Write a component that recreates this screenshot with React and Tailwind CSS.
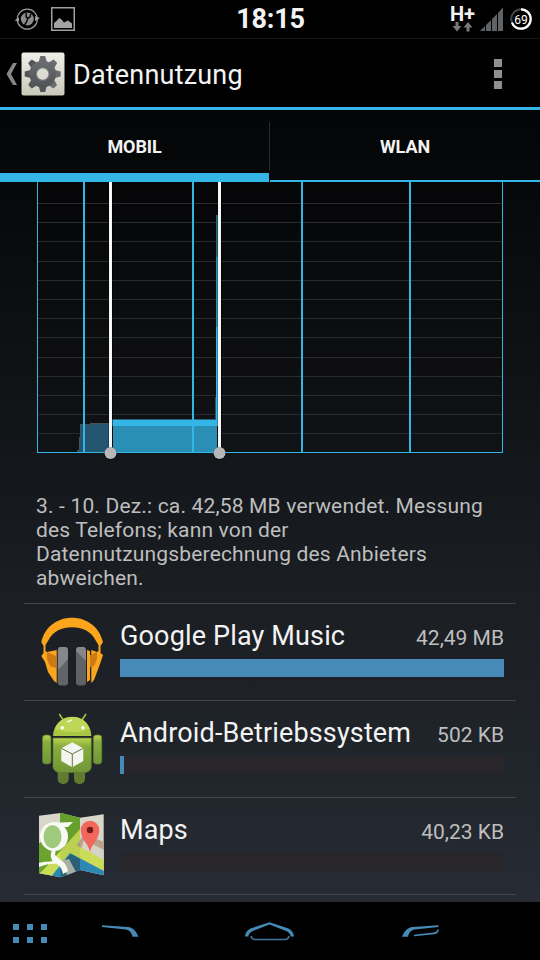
const GRID_ROWS = [21, 40, 59, 79, 98, 117, 136, 155, 175, 194, 213, 232, 251];

const apps = [
  { name: "Google Play Music", usage: "42,49 MB", percent: 100, icon: <MusicIcon /> },
  { name: "Android-Betriebssystem", usage: "502 KB", percent: 1.05, icon: <AndroidIcon /> },
  { name: "Maps", usage: "40,23 KB", percent: 0, icon: <MapsIcon /> },
];

export default function App() {
  return (
    <div className="flex h-[960px] w-[540px] flex-col overflow-hidden bg-black font-['Roboto',sans-serif] text-[#f3f3f3]">
      <StatusBar />
      <ActionBar />
      <div className="flex min-h-0 flex-1 flex-col bg-[linear-gradient(180deg,#040506_0%,#08090b_12%,#101113_32%,#14181c_47%,#1b1e23_62%,#20252b_82%,#272b34_100%)]">
        <Tabs />
        <UsageChart />
        <p className="ml-9 mt-[29px] h-[109px] w-[470px] text-[21px] leading-6 tracking-[0.17px] text-[#bebebe]">
          3. - 10. Dez.: ca. 42,58 MB verwendet. Messung
          <br />
          des Telefons; kann von der
          <br />
          Datennutzungsberechnung des Anbieters
          <br />
          abweichen.
        </p>
        <ul className="mx-6 border-t border-[#44474a]">
          {apps.map((app) => (
            <AppRow key={app.name} {...app} />
          ))}
        </ul>
      </div>
      <NavBar />
    </div>
  );
}

function StatusBar() {
  return (
    <div className="grid h-[39px] shrink-0 grid-cols-3 items-center border-b border-[#151515]">
      <div className="flex items-center gap-3 pl-[14px]">
        <svg width="26" height="24" viewBox="0 0 26 24" fill="none">
          <circle cx="13.300" cy="12.200" r="10" stroke="#9c9c9c" strokeWidth="1.300" />
          <path d="M.5 13.500L5 10.500v4zM26 11l-5-2v5z" fill="#9c9c9c" />
          <circle cx="13.300" cy="12" r="6.500" fill="#8d8d8d" />
          <path d="M12.200 6v4.200l2.200 1 2-1.800V7M13.800 11l-1 3.500-2.500 4" stroke="#0a0a0a" strokeWidth="1.500" />
        </svg>
        <svg width="24" height="24" viewBox="0 0 24 24" className="-ml-[1px]">
          <rect x=".75" y=".75" width="22.5" height="22.5" fill="none" stroke="#a0a0a0" strokeWidth="1.5" />
          <path d="M3 21v-5l3-2.500 2-2.500 2 1 3 3.500 4-2 4 3V21z" fill="#a3a3a3" />
        </svg>
      </div>
      <div className="pl-px text-center text-[27px] font-bold leading-[38px] tracking-[-0.2px]">18:15</div>
      <div className="flex items-center justify-end gap-[5px] pr-[7px]">
        <div className="flex w-[25px] flex-col items-center">
          <span className="text-[20px] font-bold leading-[15px]">H+</span>
          <svg width="22" height="10" viewBox="0 0 22 10" fill="#77797b">
            <path d="M3.500 0h3v4h3L5 9.500.5 4h3z" />
            <path d="M14.500 9.500h3v-4h3L16 0l-4.500 5.500h3z" />
          </svg>
        </div>
        <svg width="24" height="24" viewBox="0 0 24 24" fill="#606365">
          <path d="M0 24l5-5v5zM6 24v-6l5-5v11zM12 24V12l5-5v17zM18 24V6l5-5.500V24z" />
        </svg>
        <svg width="24" height="24" viewBox="0 0 24 24">
          <circle cx="12" cy="12" r="9.700" fill="none" stroke="#44474b" strokeWidth="2" />
          <circle
            cx="12"
            cy="12"
            r="9.700"
            fill="none"
            stroke="#fff"
            strokeWidth="2.200"
            pathLength="100"
            strokeDasharray="69 31"
            transform="rotate(-90 12 12)"
          />
          <text x="12" y="16.500" textAnchor="middle" fontSize="12" fill="#fff">
            69
          </text>
        </svg>
      </div>
    </div>
  );
}

function ActionBar() {
  return (
    <header className="flex h-[71px] shrink-0 items-center border-b-[3px] border-[#33b5e5] bg-black pl-[6px]">
      <svg width="11" height="22" viewBox="0 0 11 22" fill="#85878a" className="mt-[2px]">
        <path d="M7 0h4L5 11l6 11H7L.5 11z" />
      </svg>
      <div className="ml-[4px] mt-px">
        <SettingsIcon />
      </div>
      <h1 className="ml-[8px] mt-[4px] text-[27px] leading-none tracking-[0.2px]">Datennutzung</h1>
      <div className="ml-auto mr-[38px] mt-[2px] flex flex-col gap-[3px]">
        <span className="size-2 bg-[#8d8f90]" />
        <span className="size-2 bg-[#8d8f90]" />
        <span className="size-2 bg-[#8d8f90]" />
      </div>
    </header>
  );
}

function Tabs() {
  return (
    <div className="flex h-[72px] shrink-0 text-[18px] font-bold tracking-[-0.1px]">
      <div className="flex w-[269px] items-center justify-center border-b-[9px] border-[#33b5e5] pt-[10px]">MOBIL</div>
      <div className="mt-3 h-12 w-px bg-[#2b2c2d]" />
      <div className="flex flex-1 items-center justify-center border-b-2 border-[#33b5e5] pt-[3px]">WLAN</div>
    </div>
  );
}

function UsageChart() {
  return (
    <svg className="block shrink-0" width="540" height="283" viewBox="0 0 540 283" shapeRendering="crispEdges">
      <rect x="38" y="0" width="464" height="270" fill="#000" opacity="0.12" />
      <g fill="#292b2d">
        {GRID_ROWS.map((y) => (
          <rect key={y} x="38" y={y} width="464" height="1" />
        ))}
      </g>

      {/* usage before the selected range */}
      <path d="M77 270v-2h2l2-26h9v-1h19v29z" fill="#245672" />
      <path d="M77 268h2l2-26h9v-1h19" fill="none" stroke="#45535a" />

      {/* selected range */}
      <rect x="112" y="237" width="104" height="1" fill="#286580" />
      <rect x="112" y="238" width="105" height="6" fill="#33b5e5" />
      <rect x="113" y="244" width="104" height="26" fill="#2b8fb5" />
      <rect x="215" y="215" width="1" height="22" fill="#28566a" />
      <rect x="216" y="33" width="2" height="42" fill="#276985" />
      <rect x="216" y="75" width="2" height="70" fill="#2b8fb5" />
      <rect x="216" y="145" width="2" height="99" fill="#33b5e5" />

      <g fill="#33b5e5">
        <rect x="37" y="0" width="1" height="271" />
        <rect x="83" y="0" width="2" height="270" />
        <rect x="192" y="0" width="2" height="270" />
        <rect x="301" y="0" width="2" height="270" />
        <rect x="409" y="0" width="2" height="270" />
        <rect x="502" y="0" width="1" height="271" />
        <rect x="37" y="270" width="466" height="1" />
      </g>

      <Sweep x={109} />
      <Sweep x={218} />
    </svg>
  );
}

function Sweep({ x }) {
  return (
    <g>
      <rect x={x - 1} y="0" width="1" height="270" fill="#000" opacity="0.25" />
      <rect x={x + 3} y="0" width="1" height="270" fill="#000" opacity="0.5" />
      <rect x={x} y="0" width="3" height="267" fill="#f7f7f7" />
      <circle cx={x + 1.5} cy="271.500" r="6.500" fill="#000" opacity="0.4" shapeRendering="auto" />
      <circle cx={x + 1.5} cy="271" r="6" fill="#b7b7b7" shapeRendering="auto" />
    </g>
  );
}

function AppRow({ name, usage, percent, icon }) {
  return (
    <li className="flex h-[97px] items-center border-b border-[#44474a] px-3">
      <div className="mr-3 size-[72px] shrink-0">{icon}</div>
      <div className="flex-1 self-start pt-[14px]">
        <div className="flex h-[41px] items-start justify-between">
          <span className="text-[27px] leading-[36px] tracking-[0.15px]">{name}</span>
          <span className="text-[21px] leading-[40px] text-[#bebebe]">{usage}</span>
        </div>
        <div className="h-[18px] bg-[#28252b]">
          <div className="h-full bg-[#468ab8]" style={{ width: `${percent}%` }} />
        </div>
      </div>
    </li>
  );
}

function NavBar() {
  return (
    <nav className="h-[58px] shrink-0 bg-black">
      <svg width="540" height="58" viewBox="0 0 540 58" fill="none" stroke="#468ab8">
        <g fill="#468ab8" stroke="none">
          {[13, 27, 41].map((x) => (
            <g key={x}>
              <rect x={x} y="22" width="6" height="6" />
              <rect x={x} y="35" width="6" height="6" />
            </g>
          ))}
        </g>
        <path d="M102 23.300l26 1.700c5 .5 8 4 10.500 9.700h-6c-1-4-2.500-6.200-6.500-7.200l-24-2.500z" fill="#468ab8" stroke="none" />
        <path
          d="M245 34.500c.8-5 3-7 7-8.500l17.500-5.800 17.500 5.800c4 1.500 6.200 3.500 7 8.500h-3.200c-.8-3-2-4.500-5.300-5.800l-16-6.200-16 6.200c-3.300 1.300-4.500 2.800-5.300 5.800z"
          fill="#468ab8"
          stroke="none"
        />
        <path d="M251 34c.5 2 2 3.500 4 3.500h30c2 0 3.500-1.500 4-3.500" strokeWidth="1.600" stroke="#42749d" />
        <path d="M438.500 23.300l-26 1.700c-5 .5-8 4-10.500 9.700h6c1-4 2.500-6.200 6.500-7.200l24-2.500z" fill="#468ab8" stroke="none" />
        <path d="M438 27.500c0 2.500-1.500 3.500-4 3.800l-20 2.200" strokeWidth="1.700" />
      </svg>
    </nav>
  );
}

function SettingsIcon() {
  return (
    <svg width="44" height="44" viewBox="0 0 44 44">
      <defs>
        <linearGradient id="tile" x1="0" y1="0" x2="0" y2="1">
          <stop offset="0" stopColor="#efefea" />
          <stop offset="1" stopColor="#c9c9b9" />
        </linearGradient>
        <linearGradient id="gear" x1="0" y1="0" x2="0" y2="1">
          <stop offset="0" stopColor="#6b6d70" />
          <stop offset="1" stopColor="#505356" />
        </linearGradient>
      </defs>
      <rect x=".5" y=".5" width="43" height="43" rx="2" fill="url(#tile)" />
      <g fill="url(#gear)">
        {[0, 45, 90, 135].map((angle) => (
          <path key={angle} d="M19.300 4h4.900l1.800 7v22l-1.800 7h-4.900L17.500 33V11z" transform={`rotate(${angle} 21.700 22)`} />
        ))}
        <circle cx="21.700" cy="22" r="13.300" />
      </g>
      <circle cx="21.700" cy="22" r="7" fill="#74777a" />
      <circle cx="21.700" cy="22" r="5.800" fill="#dcdcd2" />
    </svg>
  );
}

function MusicIcon() {
  return (
    <svg width="72" height="72" viewBox="0 0 72 72">
      <path
        d="M5.300 26C9 10 22 1.700 36 1.700S63 10 67 26l-2.500 4v7l2.500 2-3 9-6 16-2.700 3V34l5.700 2 1.500-1v-6L60 25C55 15 46 11.300 36 11.300S17 15 12 25l-2.500 4v6l1.500 1 9.700-2v33L18 65l-6-9-3-10-3.700-6L7.500 37v-7z"
        fill="#fba51c"
      />
      <path d="M11 36l9 4v12l-6-2-3-7zM61 36l-9 4v12l6-2 3-7z" fill="#cd7a16" />
      <path d="M51 34l3 1v29l-3 2z" fill="#fba51c" />
      <rect x="21.700" y="31" width="10.300" height="38.500" rx="3" fill="#626467" />
      <rect x="40" y="31" width="10" height="38.500" rx="3" fill="#606265" />
      <path d="M22 35c0-2.500 1-4 3-4h4c2 0 3 1.500 3 4v8L22 54zM40 35c0-2.500 1-4 3-4h4c2 0 3 1.500 3 4v10z" fill="#85878a" />
    </svg>
  );
}

function AndroidIcon() {
  return (
    <svg width="72" height="72" viewBox="0 0 72 72">
      <defs>
        <linearGradient id="droid" x1="0" y1="0" x2="0" y2="1">
          <stop offset="0" stopColor="#bcd450" />
          <stop offset="0.25" stopColor="#86ad3c" />
          <stop offset="1" stopColor="#719638" />
        </linearGradient>
      </defs>
      <path d="M23.300 1l4 6M50 1l-4 6" stroke="#a8cb40" strokeWidth="1.500" />
      <path d="M17 23C17.500 11 26 3.700 36.300 3.700S55 11 55.300 23z" fill="#a9c744" />
      <path d="M19 16C22 8 28 4 36.300 4S51 8 53.500 16C44 20 29 20 19 16z" fill="#c0d657" />
      <circle cx="26.300" cy="14.700" r="1.700" fill="#fff" />
      <circle cx="47" cy="14.700" r="1.700" fill="#fff" />
      <path d="M31 9l5-2" stroke="#f3f8d7" strokeWidth="1.500" />
      <g fill="#627b31">
        <rect x="21.700" y="54" width="11" height="17" rx="5" />
        <rect x="38" y="54" width="11" height="17" rx="5" />
      </g>
      <g fill="url(#droid)" stroke="#587b2c" strokeWidth=".7">
        <rect x="6.500" y="22" width="8.500" height="29" rx="3" />
        <rect x="57.300" y="22" width="8.500" height="29" rx="3" />
        <path d="M17 25h38.300v28c0 4-3 6.500-7 6.500H24c-4 0-7-2.500-7-6.500z" />
      </g>
      <path d="M36.300 29.300l11 6V48l-11 6.300-11-6.300V35.300z" fill="#f4f5f1" />
      <path d="M25.300 35.300l11 5.700 11-5.700M36.300 41v13" fill="none" stroke="#68753e" strokeWidth="1" />
    </svg>
  );
}

function MapsIcon() {
  return (
    <svg width="72" height="72" viewBox="0 0 72 72">
      <defs>
        <clipPath id="sheet">
          <path d="M3 5.700L24.700 3 44 7.700l23.700-3.400v61L44 60l-19.300 7.300L3 63.300z" />
        </clipPath>
      </defs>
      <g clipPath="url(#sheet)">
        <path d="M0 0h72v72H0z" fill="#d7d6c9" />
        <path d="M24 0l20 7v17L28 44 0 66V36l24-20z" fill="#6aa42e" />
        <path d="M40 36l8-12 20 8v12l-20-4z" fill="#bda28b" />
        <path d="M48 30l20 10v14L44 42z" fill="#d5d4c7" />
        <path d="M0 68l44-49v11L16 68z" fill="#cbdc57" />
        <path d="M26 50l14-15 28 15v11L44 49l-6-2z" fill="#cbdc57" />
        <path d="M14 68l20-25 34 18v11H14z" fill="#2c88b2" />
        <path d="M24.700 54L35 44l9 5v12l-19.300 7z" fill="#235e85" />
        <path d="M23 51l10-2 8 15-8 4z" fill="#b5b7b3" />
        <path d="M24.700 0L44 7v54l-19.300 8z" fill="#4f7a2a" opacity=".12" />
      </g>
      {/* old Google g */}
      <ellipse cx="18" cy="26.500" rx="14" ry="14.500" fill="#f8f8f4" />
      <path d="M15 12l10 .5L37 12l-5 5h-7zM20 38l-1 7 6 5c4 3 6 6 7 11l-5 3c-1-6-4-9-8-11-5-4-5-8-3-13zM3 53c5-2 12-1 20-2l2 3c-7-1-16 0-22 3z" fill="#f8f8f4" />
      <ellipse cx="16.500" cy="26.700" rx="9" ry="11.500" fill="#9fca7b" />
      <path
        d="M54 42.500c-.7-8-9.300-13-9.300-22.500a9.300 9.300 0 0 1 18.600 0c0 9.500-8.600 14.500-9.300 22.500z"
        fill="#f3665c"
      />
      <circle cx="54" cy="20" r="3.200" fill="#731d19" />
    </svg>
  );
}
